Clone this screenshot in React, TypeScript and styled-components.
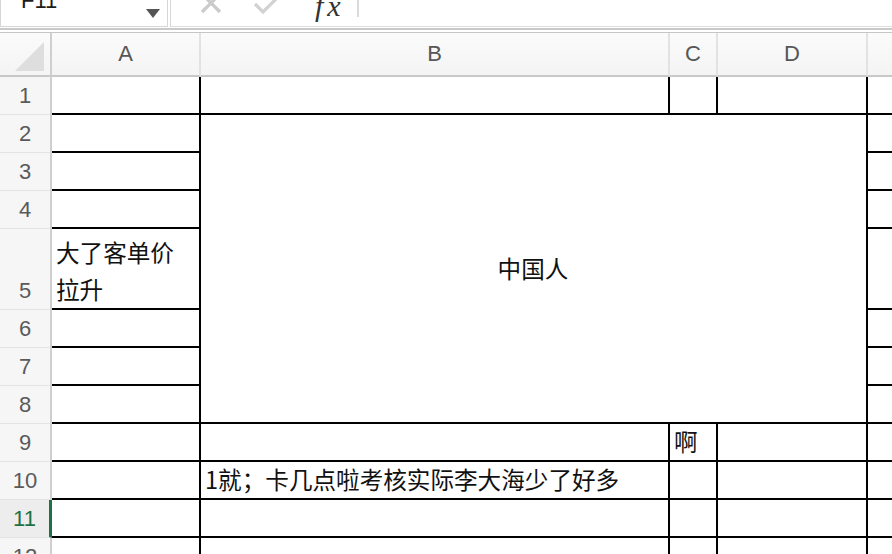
import React from 'react'
import styled, { createGlobalStyle } from 'styled-components'

const GlobalStyle = createGlobalStyle`
    html, body {
        margin: 0;
        padding: 0;
        background: #ffffff;
        overflow: hidden;
    }
    body {
        font-family: 'Liberation Sans', 'Noto Sans CJK SC', sans-serif;
    }
`

const COLUMNS = ['A', 'B', 'C', 'D', 'E']
const ROW_COUNT = 12
const SELECTED_ROW = 11

// merged range B2:D8
const MERGE = { fromRow: 2, toRow: 8, fromCol: 1, toCol: 3, text: '中国人' }

const values: Record<string, string> = {
    A5: '大了客单价拉升',
    C9: '啊',
    B10: '1就；卡几点啦考核实际李大海少了好多',
}

const isMerged = (row: number, col: number) =>
    row >= MERGE.fromRow && row <= MERGE.toRow && col >= MERGE.fromCol && col <= MERGE.toCol

export default function App() {
    const body: React.ReactNode[] = []
    for (let r = 1; r <= ROW_COUNT; r++) {
        body.push(
            <RowHeader key={`h${r}`} $selected={r === SELECTED_ROW}>
                {r}
            </RowHeader>
        )
        COLUMNS.forEach((c, ci) => {
            if (isMerged(r, ci)) {
                if (r === MERGE.fromRow && ci === MERGE.fromCol) {
                    body.push(
                        <MergedCell
                            key={`m${r}${c}`}
                            $cols={MERGE.toCol - MERGE.fromCol + 1}
                            $rows={MERGE.toRow - MERGE.fromRow + 1}
                        >
                            {MERGE.text}
                        </MergedCell>
                    )
                }
                return
            }
            body.push(<Cell key={`${c}${r}`}>{values[`${c}${r}`]}</Cell>)
        })
    }

    return (
        <>
            <GlobalStyle />
            <Window>
                <TopBar>
                    <NameBox>
                        <NameText>F11</NameText>
                        <DropArrow />
                    </NameBox>
                    <FormulaBar>
                        <ToolIcon width="24" height="24" viewBox="0 0 24 24" $top={-9}>
                            <path d="M3 3 L21 21 M21 3 L3 21" stroke="#cbcbcb" strokeWidth="3.2" fill="none" />
                        </ToolIcon>
                        <ToolIcon width="28" height="22" viewBox="0 0 28 22" $top={-7} $left={30}>
                            <polyline points="2,11 10,19 26,3" stroke="#d2d2d2" strokeWidth="3.2" fill="none" />
                        </ToolIcon>
                        <Fx>fx</Fx>
                        <Divider />
                    </FormulaBar>
                </TopBar>
                <Sheet>
                    <Corner>
                        <svg width="29" height="29" viewBox="0 0 29 29">
                            <polygon points="0,29 29,0 29,29" fill="#dedede" />
                        </svg>
                    </Corner>
                    {COLUMNS.map((c) => (
                        <ColHeader key={c}>{c}</ColHeader>
                    ))}
                    {body}
                </Sheet>
            </Window>
        </>
    )
}

const Window = styled.div`
    width: 100vw;
    height: 100vh;
    overflow: hidden;
    background: #ffffff;
`

const TopBar = styled.div`
    display: flex;
    height: 28px;
    border-bottom: 2px solid #c9c9c9;
    margin-bottom: 2px;
    overflow: hidden;
    background: #ffffff;
`

const NameBox = styled.div`
    width: 168px;
    height: 27px;
    box-sizing: border-box;
    border: 1px solid #d6d6d6;
    border-top: none;
    display: flex;
    align-items: flex-start;
    justify-content: space-between;
    padding: 0 7px 0 20px;
`

const NameText = styled.span`
    font-family: 'Liberation Sans', sans-serif;
    font-size: 22px;
    line-height: 22px;
    margin-top: -10px;
    color: #1c1c1c;
`

const DropArrow = styled.span`
    width: 0;
    height: 0;
    margin-top: 9px;
    border-left: 7px solid transparent;
    border-right: 7px solid transparent;
    border-top: 9px solid #555555;
`

const FormulaBar = styled.div`
    flex: 1;
    height: 27px;
    box-sizing: border-box;
    margin-left: 2px;
    border-left: 1px solid #d6d6d6;
    border-bottom: 1px solid #dedede;
    display: flex;
    align-items: flex-start;
    padding-left: 28px;
`

const ToolIcon = styled.svg<{ $top: number; $left?: number }>`
    flex: none;
    margin-top: ${(p) => p.$top}px;
    margin-left: ${(p) => p.$left ?? 0}px;
`

const Fx = styled.span`
    margin-left: 34px;
    margin-top: -9px;
    font-family: 'Liberation Serif', serif;
    font-style: italic;
    font-size: 30px;
    line-height: 30px;
    letter-spacing: 4px;
    color: #333333;
`

const Divider = styled.span`
    width: 2px;
    height: 17px;
    margin-left: 12px;
    background: #dadada;
`

const Sheet = styled.div`
    display: grid;
    grid-template-columns: 52px 149px 469px 48px 150px 150px;
    grid-template-rows: 44px repeat(4, 38px) 81px repeat(7, 38px);
    border-top: 1px solid #c6c6c6;
`

const HeaderBase = styled.div`
    box-sizing: border-box;
    background: linear-gradient(#fbfbfb, #f4f4f4);
    color: #565656;
    font-family: 'Liberation Sans', sans-serif;
    font-size: 22px;
`

const Corner = styled(HeaderBase)`
    display: flex;
    justify-content: flex-end;
    align-items: flex-end;
    padding: 0 6px 4px 0;
    border-right: 2px solid #cfcfcf;
    border-bottom: 2px solid #c8c8c8;
`

const ColHeader = styled(HeaderBase)`
    display: flex;
    align-items: center;
    justify-content: center;
    border-right: 2px solid #e2e2e2;
    border-bottom: 2px solid #c8c8c8;
`

const RowHeader = styled(HeaderBase)<{ $selected?: boolean }>`
    display: flex;
    align-items: flex-end;
    justify-content: center;
    line-height: 37px;
    background: ${(p) => (p.$selected ? '#ededed' : '#f6f6f6')};
    color: ${(p) => (p.$selected ? '#1f7145' : '#5a5a5a')};
    border-bottom: 1px solid #e3e3e3;
    border-right: ${(p) => (p.$selected ? '3px solid #1f7145' : '2px solid #cfcfcf')};
`

const Cell = styled.div`
    box-sizing: border-box;
    display: flex;
    align-items: flex-end;
    padding: 0 5px 0 4px;
    border-right: 2px solid #000000;
    border-bottom: 2px solid #000000;
    font-family: 'Noto Sans CJK SC', 'Liberation Sans', sans-serif;
    font-size: 23.6px;
    line-height: 37px;
    color: #111111;
    overflow: hidden;
`

const MergedCell = styled(Cell)<{ $cols: number; $rows: number }>`
    grid-column: span ${(p) => p.$cols};
    grid-row: span ${(p) => p.$rows};
    align-items: center;
    justify-content: center;
`
